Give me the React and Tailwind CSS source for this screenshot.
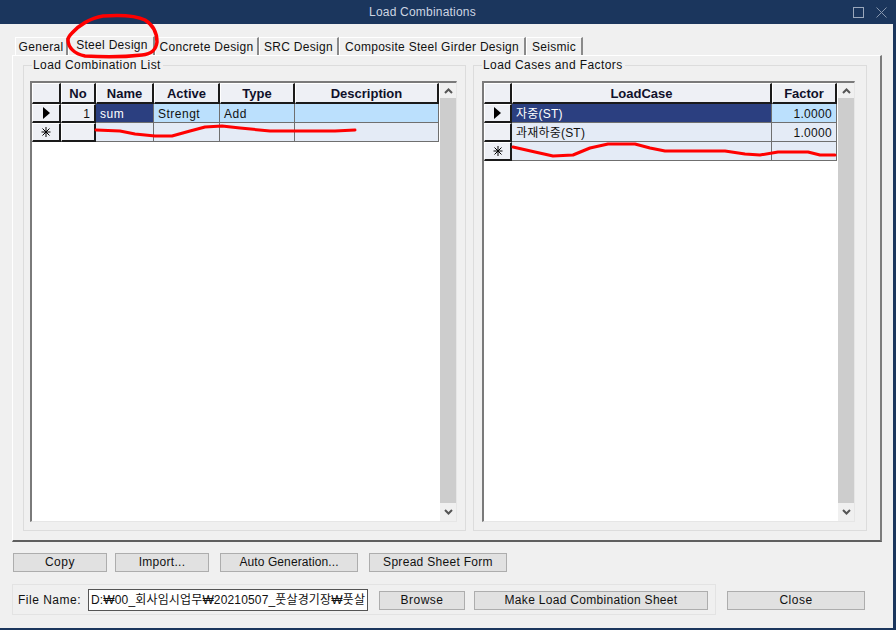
const font = { fontFamily: '"Liberation Sans", "Noto Sans CJK KR", sans-serif' };

const TABS = [
  { label: 'General', w: 'w-[53px]' },
  { label: 'Steel Design', w: 'w-[87px]', active: true },
  { label: 'Concrete Design', w: 'w-[104px]' },
  { label: 'SRC Design', w: 'w-[80px]' },
  { label: 'Composite Steel Girder Design', w: 'w-[187px]' },
  { label: 'Seismic', w: 'w-[57px]' },
];

const Btn = ({ w, track = 'tracking-[0.3px]', children }) => (
  <button className={`${w} ${track} h-[19px] pb-[2px] bg-[#e1e1e1] border border-[#adadad] text-[12px] text-[#111] leading-none flex items-center justify-center`}>
    {children}
  </button>
);

const HeadCell = ({ w, children }) => (
  <div className={`${w} h-[21px] shrink-0 pt-[2px] bg-[#eef0f5] border-t border-l border-white border-r-2 border-b-2 border-r-[#1a1a1a] border-b-[#1a1a1a] flex items-center justify-center font-bold text-[13px] text-[#10102a]`}>
    {children}
  </div>
);

const Cell = ({ w, tone = 'bg-[#e4ebf6]', align = 'justify-start pl-[4px]', track = 'tracking-[0.5px]', children }) => (
  <div className={`${w} ${tone} ${align} ${track} h-[19px] pt-[1px] shrink-0 border-r border-b border-[#6f6f6f] flex items-center text-[12px] overflow-hidden whitespace-nowrap`}>
    {children}
  </div>
);

const RowHead = ({ w, children }) => (
  <div className={`${w} h-[19px] shrink-0 bg-[#eef0f5] border-t border-l border-white border-r-2 border-b-2 border-r-[#1a1a1a] border-b-[#1a1a1a] flex items-center justify-center`}>
    {children}
  </div>
);

const Arrow = () => (
  <svg width="7" height="12" viewBox="0 0 7 12"><path d="M0 0 L7 6 L0 12 Z" fill="#000" /></svg>
);

const Star = () => (
  <svg width="10" height="10" viewBox="0 0 10 10" stroke="#000" strokeWidth="1">
    <path d="M5 0 V10 M0.5 5 H9.5 M1.5 1.5 L8.5 8.5 M8.5 1.5 L1.5 8.5" />
  </svg>
);

const Scrollbar = () => (
  <div className="w-[16px] shrink-0 ml-[1px] flex flex-col bg-[#f0f0f0]">
    <div className="h-[15px] flex items-center justify-center">
      <svg width="9" height="6" viewBox="0 0 9 6" fill="none" stroke="#555" strokeWidth="2"><path d="M1 5 L4.5 1.5 L8 5" /></svg>
    </div>
    <div className="flex-1 bg-[#cdcdcd]" />
    <div className="h-[18px] flex items-center justify-center">
      <svg width="9" height="6" viewBox="0 0 9 6" fill="none" stroke="#555" strokeWidth="2"><path d="M1 1 L4.5 4.5 L8 1" /></svg>
    </div>
  </div>
);

const Group = ({ title, w, pad, children }) => (
  <div className={`${w} ${pad} h-[466px] shrink-0 relative border border-[#dcdcdc] pt-[15px]`}>
    <span className="absolute left-[8px] -top-[8px] bg-[#f0f0f0] pr-[2px] pl-[1px] text-[12px] tracking-[0.4px] leading-[15px] text-[#111]">{title}</span>
    {children}
  </div>
);

const GridFrame = ({ w, children }) => (
  <div className={`${w} h-[441px] flex bg-white border-t-2 border-l-2 border-t-[#7a7a7a] border-l-[#7a7a7a] border-r border-b border-r-[#e6e6e6] border-b-[#e6e6e6]`}>
    {children}
  </div>
);

const LeftGrid = () => (
  <GridFrame w="w-[427px]">
    <div className="flex-1 flex flex-col">
      <div className="flex">
        <HeadCell w="w-[29px]" />
        <HeadCell w="w-[35px]">No</HeadCell>
        <HeadCell w="w-[58px]">Name</HeadCell>
        <HeadCell w="w-[66px]">Active</HeadCell>
        <HeadCell w="w-[75px]">Type</HeadCell>
        <HeadCell w="w-[144px]">Description</HeadCell>
      </div>
      <div className="flex">
        <RowHead w="w-[29px]"><Arrow /></RowHead>
        <RowHead w="w-[35px]"><span className="w-full text-right pr-[4px] pt-[1px] text-[12px]">1</span></RowHead>
        <Cell w="w-[58px]" tone="bg-[#2b3f80] text-white">sum</Cell>
        <Cell w="w-[66px]" tone="bg-[#bbe0fd]">Strengt</Cell>
        <Cell w="w-[75px]" tone="bg-[#bbe0fd]">Add</Cell>
        <Cell w="w-[144px]" tone="bg-[#bbe0fd]" />
      </div>
      <div className="flex">
        <RowHead w="w-[29px]"><Star /></RowHead>
        <RowHead w="w-[35px]" />
        <Cell w="w-[58px]" />
        <Cell w="w-[66px]" />
        <Cell w="w-[75px]" />
        <Cell w="w-[144px]" />
      </div>
    </div>
    <Scrollbar />
  </GridFrame>
);

const RightGrid = () => (
  <GridFrame w="w-[373px]">
    <div className="flex-1 flex flex-col">
      <div className="flex">
        <HeadCell w="w-[28px]" />
        <HeadCell w="w-[260px]">LoadCase</HeadCell>
        <HeadCell w="w-[65px]">Factor</HeadCell>
      </div>
      <div className="flex">
        <RowHead w="w-[28px]"><Arrow /></RowHead>
        <Cell w="w-[260px]" tone="bg-[#2b3f80] text-white" track="tracking-[0.2px]">자중(ST)</Cell>
        <Cell w="w-[65px]" tone="bg-[#bbe0fd]" align="justify-end pr-[4px]" track="tracking-[0.3px]">1.0000</Cell>
      </div>
      <div className="flex">
        <RowHead w="w-[28px]" />
        <Cell w="w-[260px]" track="tracking-[0.2px]">과재하중(ST)</Cell>
        <Cell w="w-[65px]" align="justify-end pr-[4px]" track="tracking-[0.3px]">1.0000</Cell>
      </div>
      <div className="flex">
        <RowHead w="w-[28px]"><Star /></RowHead>
        <Cell w="w-[260px]" />
        <Cell w="w-[65px]" />
      </div>
    </div>
    <Scrollbar />
  </GridFrame>
);

export default function App() {
  return (
    <div style={font} className="relative w-[896px] h-[630px] overflow-hidden bg-[#1b365d] flex flex-col text-[#111]">
      {/* title bar */}
      <div className="h-[24px] shrink-0 flex items-center justify-center pr-[51px] relative text-[12px] tracking-[0.2px] text-[#cdd5e2]">
        Load Combinations
        <div className="absolute right-[9px] top-[7px] flex items-center gap-[12px]">
          <div className="w-[11px] h-[11px] border border-[#9aa7bb]" />
          <svg width="11" height="11" viewBox="0 0 11 11" stroke="#8796ad" strokeWidth="1"><path d="M0.5 0.5 L10.5 10.5 M10.5 0.5 L0.5 10.5" /></svg>
        </div>
      </div>

      {/* client area */}
      <div className="w-[893px] h-[604px] shrink-0 bg-[#f0f0f0] flex flex-col pl-[12px]">
        {/* tabs */}
        <div className="h-[31px] shrink-0 flex items-end pl-[3px]">
          {TABS.map((t) => (
            <div
              key={t.label}
              className={`${t.w} ${t.active ? 'h-[19px] pb-[3px] pl-[2px]' : 'h-[18px]'} shrink-0 flex items-center justify-center text-[12px] tracking-[0.3px] whitespace-nowrap border-t border-l border-white border-r-2 border-r-[#8a8a8a]`}
            >
              {t.label}
            </div>
          ))}
        </div>

        {/* tab page */}
        <div className="w-[870px] h-[487px] shrink-0 border-t border-l border-white border-r-2 border-b-2 border-r-[#7c7c7c] border-b-[#5f5f5f] flex gap-[7px] pl-[10px] pt-[9px]">
          <Group title="Load Combination List" w="w-[443px]" pad="pl-[6px]"><LeftGrid /></Group>
          <Group title="Load Cases and Factors" w="w-[394px]" pad="pl-[8px]"><RightGrid /></Group>
        </div>

        {/* action buttons */}
        <div className="flex mt-[11px] ml-[1px]">
          <Btn w="w-[94px]" track="tracking-[0.55px]">Copy</Btn>
          <div className="w-[8px]" />
          <Btn w="w-[94px]">Import...</Btn>
          <div className="w-[11px]" />
          <Btn w="w-[138px]" track="tracking-[0.1px]">Auto Generation...</Btn>
          <div className="w-[11px]" />
          <Btn w="w-[138px]">Spread Sheet Form</Btn>
        </div>

        {/* file row */}
        <div className="flex mt-[12px] items-start">
          <div className="w-[704px] h-[31px] border border-[#e3e3e3] flex items-start pt-[4px] pl-[5px] text-[12px] tracking-[0.5px]">
            <span className="w-[70px] h-[22px] shrink-0 flex items-center">File Name:</span>
            <div className="w-[280px] h-[22px] shrink-0 bg-white border border-[#555] flex items-center pl-[2px] overflow-hidden whitespace-nowrap tracking-[0.15px] text-[12px]">
              D:₩00_회사임시업무₩20210507_풋살경기장₩풋살
            </div>
            <div className="w-[11px] shrink-0" />
            <div className="mt-[2px] flex">
              <Btn w="w-[86px] shrink-0" track="tracking-[0.5px]">Browse</Btn>
              <div className="w-[9px] shrink-0" />
              <Btn w="w-[234px] shrink-0">Make Load Combination Sheet</Btn>
            </div>
          </div>
          <div className="w-[11px]" />
          <div className="pt-[7px]"><Btn w="w-[138px]" track="tracking-[0.5px]">Close</Btn></div>
        </div>
      </div>

      {/* red marker scribbles drawn over the screenshot */}
      <svg className="absolute inset-0 pointer-events-none" width="896" height="630" fill="none" stroke="#f00" strokeWidth="3.5" strokeLinecap="round" strokeLinejoin="round">
        <path d="M72 33 C78 26 90 18 103 16 C118 15 135 15 145 20 C153 25 157 33 157 42 C156 50 152 54 142 55 C125 57 100 57 85 56 C74 54 68 47 68 40 C68 37 70 35 72 33 Z" />
        <path strokeWidth="3" d="M96 130 L120 131 L135 134 L155 136 L172 136 L190 131 L205 127 L222 126 L240 128 L270 131 L335 131 L355 130" />
        <path strokeWidth="3" d="M513 147 L535 152 L553 156 L573 155 L590 148 L608 144 L635 144 L650 148 L665 151 L725 151 L745 154 L760 155 L778 152 L808 152 L820 155 L835 155" />
      </svg>
    </div>
  );
}
